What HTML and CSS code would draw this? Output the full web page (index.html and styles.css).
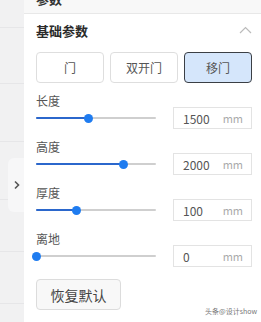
FILE: index.html
```html
<!DOCTYPE html>
<html lang="zh">
<head>
<meta charset="utf-8">
<link rel="stylesheet" href="styles.css">
</head>
<body>
<div class="app">
  <aside class="sidebar">
    <div class="side-row r1"></div>
    <div class="side-row r2"></div>
    <div class="side-row r3"></div>
    <div class="side-row r4"></div>
    <div class="side-row r5"></div>
    <div class="side-row r6"></div>
    <div class="toggle">
      <svg width="8" height="10" viewBox="0 0 8 10"><path d="M2 1.5 L5.5 5 L2 8.5" fill="none" stroke="#555" stroke-width="1.6"/></svg>
    </div>
  </aside>
  <main class="panel">
    <div class="topstrip"><span class="cut">参数</span></div>
    <div class="content">
      <div class="head">
        <span class="title">基础参数</span>
        <svg class="up" width="13" height="8" viewBox="0 0 13 8"><path d="M1 7 L6.5 1.5 L12 7" fill="none" stroke="#bbb" stroke-width="1.2"/></svg>
      </div>
      <div class="types">
        <button class="type">门</button>
        <button class="type">双开门</button>
        <button class="type active">移门</button>
      </div>
      <div class="param">
        <div class="label">长度</div>
        <div class="slider"><div class="fill" style="width:44%"></div><div class="thumb" style="left:44%"></div></div>
        <div class="input"><span class="val">1500</span><span class="unit">mm</span></div>
      </div>
      <div class="param">
        <div class="label">高度</div>
        <div class="slider"><div class="fill" style="width:72.5%"></div><div class="thumb" style="left:72.5%"></div></div>
        <div class="input"><span class="val">2000</span><span class="unit">mm</span></div>
      </div>
      <div class="param">
        <div class="label">厚度</div>
        <div class="slider"><div class="fill" style="width:34%"></div><div class="thumb" style="left:34%"></div></div>
        <div class="input"><span class="val">100</span><span class="unit">mm</span></div>
      </div>
      <div class="param">
        <div class="label">离地</div>
        <div class="slider"><div class="fill" style="width:0%"></div><div class="thumb" style="left:0%"></div></div>
        <div class="input"><span class="val">0</span><span class="unit">mm</span></div>
      </div>
      <button class="reset">恢复默认</button>
    </div>
    <div class="watermark">头条@设计show</div>
  </main>
</div>
</body>
</html>
```
FILE: styles.css
```css
* { box-sizing: border-box; }
html, body { margin: 0; padding: 0; }
body {
  width: 261px;
  height: 322px;
  overflow: hidden;
  font-family: "Noto Sans CJK SC", "Noto Sans", sans-serif;
  color: #333;
  background: #fff;
}
.app {
  display: flex;
  height: 322px;
}
.sidebar {
  position: relative;
  width: 24px;
  flex: none;
  background: #f1f1f2;
  display: flex;
  flex-direction: column;
}
.side-row { border-bottom: 1px solid #e6e6e8; }
.r1 { height: 28px; }
.r2 { height: 56px; }
.r3 { height: 58px; }
.r4 { height: 58px; }
.r5 { height: 52px; }
.r6 { height: 52px; }
.toggle {
  position: absolute;
  left: 8px;
  top: 158px;
  width: 16px;
  height: 54px;
  background: #f7f7f8;
  border-radius: 6px 0 0 6px;
  display: flex;
  align-items: center;
  justify-content: center;
  padding-left: 1px;
}
.toggle svg { display: block; }
.panel {
  position: relative;
  flex: 1;
  background: #fff;
  display: flex;
  flex-direction: column;
}
.topstrip {
  height: 14px;
  background: #f8f8f8;
  border-bottom: 1px solid #e8e8e8;
  overflow: hidden;
  padding-left: 12px;
}
.cut {
  display: block;
  font-size: 13px;
  font-weight: 700;
  line-height: 13px;
  margin-top: -8px;
  color: #333;
}
.content {
  padding: 4px 9px 0 12px;
  display: flex;
  flex-direction: column;
}
.head {
  height: 24px;
  display: flex;
  align-items: center;
  justify-content: space-between;
}
.title {
  font-size: 13px;
  font-weight: 700;
  color: #2a2a2a;
}
.up { display: block; }
.types {
  margin-top: 10px;
  display: grid;
  grid-template-columns: 1fr 1fr 1fr;
  gap: 6px;
}
.type {
  height: 31px;
  border: 1px solid #dedede;
  border-radius: 4px;
  background: #fff;
  font-family: inherit;
  font-size: 12px;
  font-weight: 400;
  color: #555;
  padding: 0;
}
.type.active {
  background: #d5e6fb;
  border-color: #3b3f45;
}
.param {
  display: grid;
  grid-template-columns: 1fr 79px;
  grid-template-rows: 13px 22px;
  column-gap: 17px;
  margin-top: 11px;
}
.label {
  grid-column: 1;
  grid-row: 1;
  font-size: 12px;
  line-height: 13px;
  color: #555;
}
.slider {
  grid-column: 1;
  grid-row: 2;
  align-self: center;
  position: relative;
  height: 2px;
  background: #cfcfcf;
  border-radius: 1px;
}
.fill {
  position: absolute;
  left: 0;
  top: 0;
  height: 2px;
  background: #2b67cc;
  border-radius: 1px;
}
.thumb {
  position: absolute;
  top: -3.5px;
  width: 9px;
  height: 9px;
  margin-left: -4.5px;
  border-radius: 50%;
  background: #1f7cf0;
}
.input {
  grid-column: 2;
  grid-row: 2;
  border: 1px solid #e3e3e3;
  display: flex;
  align-items: center;
  justify-content: space-between;
  padding: 0 8px 0 9px;
}
.val {
  font-size: 12px;
  color: #555;
}
.unit {
  font-size: 11px;
  color: #aaa;
}
.reset {
  margin-top: 12px;
  width: 85px;
  height: 31px;
  border: 1px solid #dcdcdc;
  border-radius: 4px;
  background: #f8f8f8;
  font-family: inherit;
  font-size: 14px;
  color: #444;
  padding: 0;
}
.watermark {
  position: absolute;
  right: 4px;
  bottom: 6px;
  font-size: 7px;
  color: #777;
}
```
